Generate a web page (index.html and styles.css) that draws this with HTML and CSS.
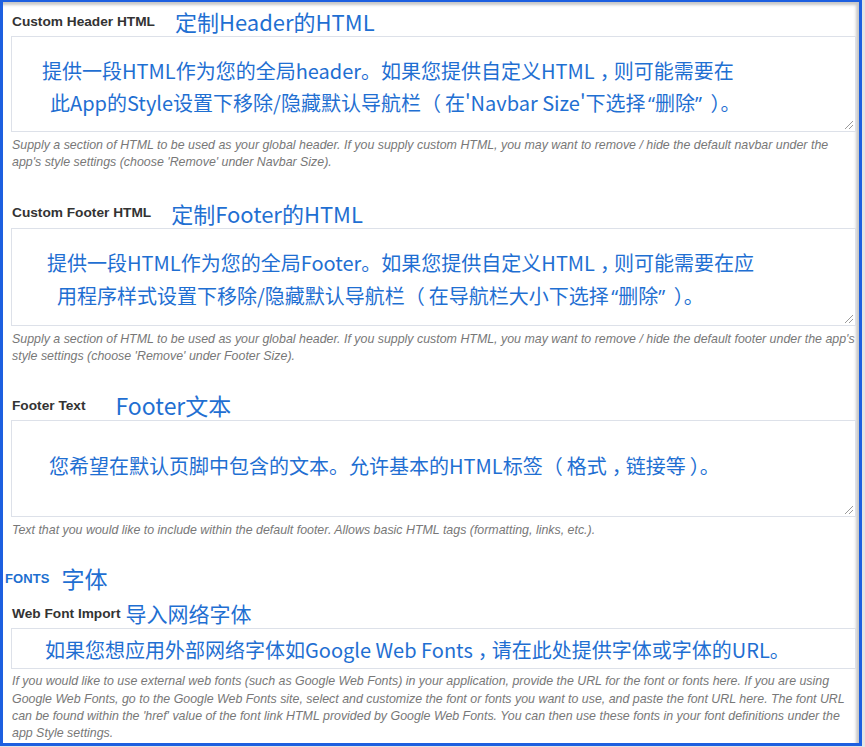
FILE: index.html
```html
<!DOCTYPE html>
<html lang="zh-CN">
<head>
<meta charset="utf-8">
<title>Settings</title>
<link rel="stylesheet" href="styles.css">
</head>
<body>
<div class="frame">
  <section class="field s1">
    <div class="head">
      <span class="label">Custom Header HTML</span>
      <span class="note n1">定制Header的HTML</span>
    </div>
    <div class="box area h1">
      <div class="line b1a">提供一段HTML作为您的全局header。如果您提供自定义HTML<span class="cm">，</span>则可能需要在</div>
      <div class="line b1b">此App的Style设置下移除/隐藏默认导航栏<span class="po">（</span>在'Navbar Size'下选择<span class="q qo">“</span>删除<span class="q">”</span> <span class="pc">）</span>。</div>
    </div>
    <p class="help">Supply a section of HTML to be used as your global header. If you supply custom HTML, you may want to remove / hide the default navbar under the<br>app's style settings (choose 'Remove' under Navbar Size).</p>
  </section>

  <section class="field s2">
    <div class="head">
      <span class="label">Custom Footer HTML</span>
      <span class="note n2">定制Footer的HTML</span>
    </div>
    <div class="box area h2">
      <div class="line b2a">提供一段HTML作为您的全局Footer。如果您提供自定义HTML<span class="cm">，</span>则可能需要在应</div>
      <div class="line b2b">用程序样式设置下移除/隐藏默认导航栏<span class="po">（</span>在导航栏大小下选择<span class="q qo">“</span>删除<span class="q">”</span> <span class="pc">）</span>。</div>
    </div>
    <p class="help">Supply a section of HTML to be used as your global header. If you supply custom HTML, you may want to remove / hide the default footer under the app's<br>style settings (choose 'Remove' under Footer Size).</p>
  </section>

  <section class="field s3">
    <div class="head">
      <span class="label">Footer Text</span>
      <span class="note n3">Footer文本</span>
    </div>
    <div class="box area h3">
      <div class="line b3a">您希望在默认页脚中包含的文本。允许基本的HTML标签<span class="po">（</span>格式<span class="cm">，</span>链接等<span class="pc">）</span>。</div>
    </div>
    <p class="help">Text that you would like to include within the default footer. Allows basic HTML tags (formatting, links, etc.).</p>
  </section>

  <section class="field s4">
    <div class="head">
      <span class="group">FONTS</span>
      <span class="note n4">字体</span>
    </div>
    <div class="head wf">
      <span class="label">Web Font Import</span>
      <span class="note n5">导入网络字体</span>
    </div>
    <div class="box input">
      <div class="line b4a">如果您想应用外部网络字体如Google Web Fonts<span class="cm">，</span>请在此处提供字体或字体的URL。</div>
    </div>
    <p class="help">If you would like to use external web fonts (such as Google Web Fonts) in your application, provide the URL for the font or fonts here. If you are using<br>Google Web Fonts, go to the Google Web Fonts site, select and customize the font or fonts you want to use, and paste the font URL here. The font URL<br>can be found within the 'href' value of the font link HTML provided by Google Web Fonts. You can then use these fonts in your font definitions under the<br>app Style settings.</p>
  </section>
</div>
</body>
</html>
```

FILE: styles.css
```css
html, body {
  margin: 0;
  padding: 0;
  background: #e4e4e4;
}

.frame {
  box-sizing: border-box;
  width: 862px;
  height: 746px;
  background: #fff;
  border: 3px solid #1d5fe0;
  border-top-width: 2px;
  box-shadow: inset -3px 3px 3px rgba(0, 0, 0, 0.22);
  padding: 4px 2px 0 8px;
  overflow: hidden;
  font-family: "Liberation Sans", Arial, sans-serif;
}

.field { margin: 0; }
.s2 { margin-top: 26px; }
.s3 { margin-top: 25px; }
.s4 { margin-top: 24px; }

.head {
  height: 30px;
  display: flex;
  align-items: center;
  white-space: nowrap;
}
.wf { margin-top: 5px; }

.label {
  font-weight: bold;
  font-size: 13.7px;
  color: #333;
  margin-left: 1px;
}

.group {
  font-weight: bold;
  font-size: 13px;
  color: #1d6fd0;
  margin-left: -6px;
  letter-spacing: 0.1px;
}

.note {
  font-family: "Noto Sans CJK SC", sans-serif;
  color: #1f6fd2;
  font-size: 22px;
  line-height: 30px;
}
.n1 { margin-left: 20px; }
.n2 { margin-left: 20px; }
.n3 { margin-left: 30px; font-size: 23px; }
.n4 { margin-left: 12px; font-size: 23px; }
.n5 { margin-left: 5px; font-size: 21px; }

.box {
  box-sizing: border-box;
  position: relative;
  width: 845px;
  border: 1px solid #dde1e9;
  background: #fff;
  font-family: "Noto Sans CJK SC", sans-serif;
  color: #1f6fd2;
  font-size: 20px;
  white-space: nowrap;
}
.h1 { height: 96px; padding-top: 18px; }
.h2 { height: 98px; padding-top: 17px; }
.h3 { height: 97px; padding-top: 29px; }
.input { height: 41px; padding-top: 5px; }

/* spacing around fullwidth punctuation, as in the reference */
.cm { margin-left: 0.25em; letter-spacing: -0.3em; }
.po { margin-right: 0.2em; }
.pc { margin-left: 0.2em; }
.q { font-family: "Open Sans", sans-serif; }
.qo { margin-left: 0.12em; }

.area::after {
  content: "";
  position: absolute;
  right: 2px;
  bottom: 2px;
  width: 8px;
  height: 8px;
  background:
    linear-gradient(135deg, transparent 0 45%, #9a9a9a 45% 55%, transparent 55% 70%, #9a9a9a 70% 80%, transparent 80%);
}

.line { line-height: 32px; }
.h2 .line { line-height: 33px; }
.b1a { margin-left: 30px; }
.b1b { margin-left: 38px; }
.b2a { margin-left: 35px; }
.b2b { margin-left: 45px; }
.b3a { margin-left: 37px; }
.b4a { margin-left: 33px; }

.help {
  margin: 5px 0 0 1px;
  font-size: 12.4px;
  line-height: 17.3px;
  font-style: italic;
  color: #787878;
  white-space: nowrap;
}
.s4 .help { margin-top: 4px; }
```
